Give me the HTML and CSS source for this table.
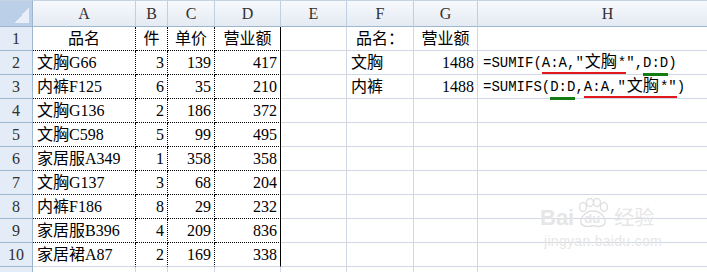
FILE: index.html
```html
<!DOCTYPE html>
<html lang="zh-CN">
<head>
<meta charset="utf-8">
<title>SUMIF</title>
<link rel="stylesheet" href="styles.css">
</head>
<body>
<div class="sheet">
<table class="grid">
  <colgroup>
    <col class="w-rh"><col class="w-a"><col class="w-b"><col class="w-c"><col class="w-d"><col class="w-e"><col class="w-f"><col class="w-g"><col class="w-h">
  </colgroup>
  <thead>
    <tr>
      <th class="corner"></th>
      <th class="colh">A</th><th class="colh">B</th><th class="colh">C</th><th class="colh">D</th><th class="colh">E</th><th class="colh">F</th><th class="colh">G</th><th class="colh">H</th>
    </tr>
  </thead>
  <tbody>
    <tr>
      <th class="rowh">1</th>
      <td class="ctr dot">品名</td><td class="ctr dot">件</td><td class="ctr dot">单价</td><td class="ctr dot last">营业额</td>
      <td></td><td class="ctr">品名：</td><td class="ctr">营业额</td><td></td>
    </tr>
    <tr>
      <th class="rowh">2</th>
      <td class="txt dot">文胸G66</td><td class="num dot">3</td><td class="num dot">139</td><td class="num dot last">417</td>
      <td></td><td class="txt">文胸</td><td class="num">1488</td>
      <td class="txt formula">=SUMIF(<span class="u-red">A:A,"<span class="cjk">文胸</span>*</span>",<span class="u-green">D:D</span>)</td>
    </tr>
    <tr>
      <th class="rowh">3</th>
      <td class="txt dot">内裤F125</td><td class="num dot">6</td><td class="num dot">35</td><td class="num dot last">210</td>
      <td></td><td class="txt">内裤</td><td class="num">1488</td>
      <td class="txt formula">=SUMIFS(<span class="u-green">D:D</span>,<span class="u-red">A:A,"<span class="cjk">文胸</span>*"</span>)</td>
    </tr>
    <tr>
      <th class="rowh">4</th>
      <td class="txt dot">文胸G136</td><td class="num dot">2</td><td class="num dot">186</td><td class="num dot last">372</td>
      <td></td><td></td><td></td><td></td>
    </tr>
    <tr>
      <th class="rowh">5</th>
      <td class="txt dot">文胸C598</td><td class="num dot">5</td><td class="num dot">99</td><td class="num dot last">495</td>
      <td></td><td></td><td></td><td></td>
    </tr>
    <tr>
      <th class="rowh">6</th>
      <td class="txt dot">家居服A349</td><td class="num dot">1</td><td class="num dot">358</td><td class="num dot last">358</td>
      <td></td><td></td><td></td><td></td>
    </tr>
    <tr>
      <th class="rowh">7</th>
      <td class="txt dot">文胸G137</td><td class="num dot">3</td><td class="num dot">68</td><td class="num dot last">204</td>
      <td></td><td></td><td></td><td></td>
    </tr>
    <tr>
      <th class="rowh">8</th>
      <td class="txt dot">内裤F186</td><td class="num dot">8</td><td class="num dot">29</td><td class="num dot last">232</td>
      <td></td><td></td><td></td><td></td>
    </tr>
    <tr>
      <th class="rowh">9</th>
      <td class="txt dot">家居服B396</td><td class="num dot">4</td><td class="num dot">209</td><td class="num dot last">836</td>
      <td></td><td></td><td></td><td></td>
    </tr>
    <tr>
      <th class="rowh">10</th>
      <td class="txt dot end">家居裙A87</td><td class="num dot end">2</td><td class="num dot end">169</td><td class="num dot last end">338</td>
      <td></td><td></td><td></td><td></td>
    </tr>
    <tr>
      <th class="rowh"></th>
      <td></td><td></td><td></td><td></td><td></td><td></td><td></td><td></td>
    </tr>
  </tbody>
</table>
<div class="watermark" aria-hidden="true">
  <div class="wm-logo">
    <span class="wm-bai">Bai</span>
    <span class="wm-paw">
      <svg width="34" height="30" viewBox="0 0 34 30">
        <g fill="none" stroke="#e0e0e0" stroke-width="1.4">
          <ellipse cx="7" cy="9" rx="3.5" ry="4.5"/>
          <ellipse cx="14" cy="4.5" rx="3.5" ry="4"/>
          <ellipse cx="21" cy="4.5" rx="3.5" ry="4"/>
          <ellipse cx="28" cy="9" rx="3.5" ry="4.5"/>
          <path d="M17 13 C9 13 4 20 5 25 C6 29 12 29 17 27.5 C22 29 28 29 29 25 C30 20 25 13 17 13 Z"/>
        </g>
      </svg>
      <span class="wm-du">du</span>
    </span>
    <span class="wm-jy">经验</span>
  </div>
  <div class="wm-url">jingyan.baidu.com</div>
</div>
</div>
</body>
</html>
```
FILE: styles.css
```css
html, body {
  margin: 0;
  padding: 0;
  background: #ffffff;
  overflow: hidden;
}

.sheet {
  position: relative;
  width: 707px;
  height: 272px;
  overflow: hidden;
}

.grid {
  border-collapse: separate;
  border-spacing: 0;
  table-layout: fixed;
  width: 738px;
  font-family: "Liberation Serif", "Noto Sans CJK SC", serif;
  font-size: 16px;
  color: #000;
}

.w-rh { width: 33px; }
.w-a { width: 103px; }
.w-b { width: 32px; }
.w-c { width: 47px; }
.w-d { width: 66px; }
.w-e { width: 66px; }
.w-f { width: 67px; }
.w-g { width: 64px; }
.w-h { width: 260px; }

.grid th,
.grid td {
  box-sizing: border-box;
  padding: 0;
  white-space: nowrap;
  overflow: visible;
  font-weight: normal;
  line-height: 20px;
}

.grid td {
  height: 24px;
  border-right: 1px solid #d0d7e5;
  border-bottom: 1px solid #d0d7e5;
  vertical-align: middle;
}

.corner {
  height: 27px;
  border-top: 1px solid #c6d3e3;
  border-right: 1px solid #9eb6ce;
  border-bottom: 1px solid #9eb6ce;
  background:
    linear-gradient(to bottom right, transparent 50%, #e9eff8 50%) no-repeat right 3px bottom 3px / 14px 16px,
    #bccfe9;
}

.colh {
  height: 27px;
  border-top: 1px solid #c6d3e3;
  border-right: 1px solid #c0cfe0;
  border-bottom: 1px solid #9eb6ce;
  background: linear-gradient(#f7f9fc, #e4eaf3);
  color: #303030;
  text-align: center;
  vertical-align: middle;
}

.rowh {
  height: 24px;
  border-right: 1px solid #9eb6ce;
  border-bottom: 1px solid #9eb6ce;
  background: #e4ecf7;
  color: #303030;
  text-align: center;
  vertical-align: middle;
}

.txt { text-align: left; padding-left: 4px !important; }
.num { text-align: right; padding-right: 3px !important; }
.ctr { text-align: center; }

.grid td.dot {
  border-right: 1px dotted #000;
  border-bottom: 1px dotted #000;
}

.grid td.dot.end {
  border-bottom: 1px solid #d0d7e5;
}

.grid td.last {
  border-right: 1px solid #000;
}

.formula {
  padding-left: 5px !important;
  font-family: "Liberation Mono", "Noto Sans CJK SC", monospace;
  font-size: 14px;
}

.formula .cjk {
  font-family: "Noto Sans CJK SC", sans-serif;
  font-size: 16px;
  line-height: 16px;
  margin: 0 1px;
}

.u-red {
  border-bottom: 2px solid #e3161b;
  padding-bottom: 1px;
}

.u-green {
  border-bottom: 3px solid #127b12;
  padding-bottom: 2px;
}

.watermark {
  position: absolute;
  left: 540px;
  top: 198px;
  color: #e6e6e6;
  font-family: "Liberation Sans", "Noto Sans CJK SC", sans-serif;
}

.wm-logo {
  display: flex;
  align-items: flex-end;
  gap: 2px;
}

.wm-bai {
  font-size: 22px;
  font-weight: bold;
  line-height: 24px;
}

.wm-paw {
  position: relative;
  display: inline-block;
  width: 34px;
  height: 32px;
}

.wm-paw svg {
  display: block;
}

.wm-du {
  position: absolute;
  left: 8px;
  top: 14px;
  font-size: 13px;
  font-weight: bold;
  line-height: 14px;
}

.wm-jy {
  font-size: 20px;
  line-height: 24px;
  margin-left: 2px;
}

.wm-url {
  margin-top: 3px;
  margin-left: 4px;
  font-size: 14px;
  letter-spacing: 0.3px;
}
```
